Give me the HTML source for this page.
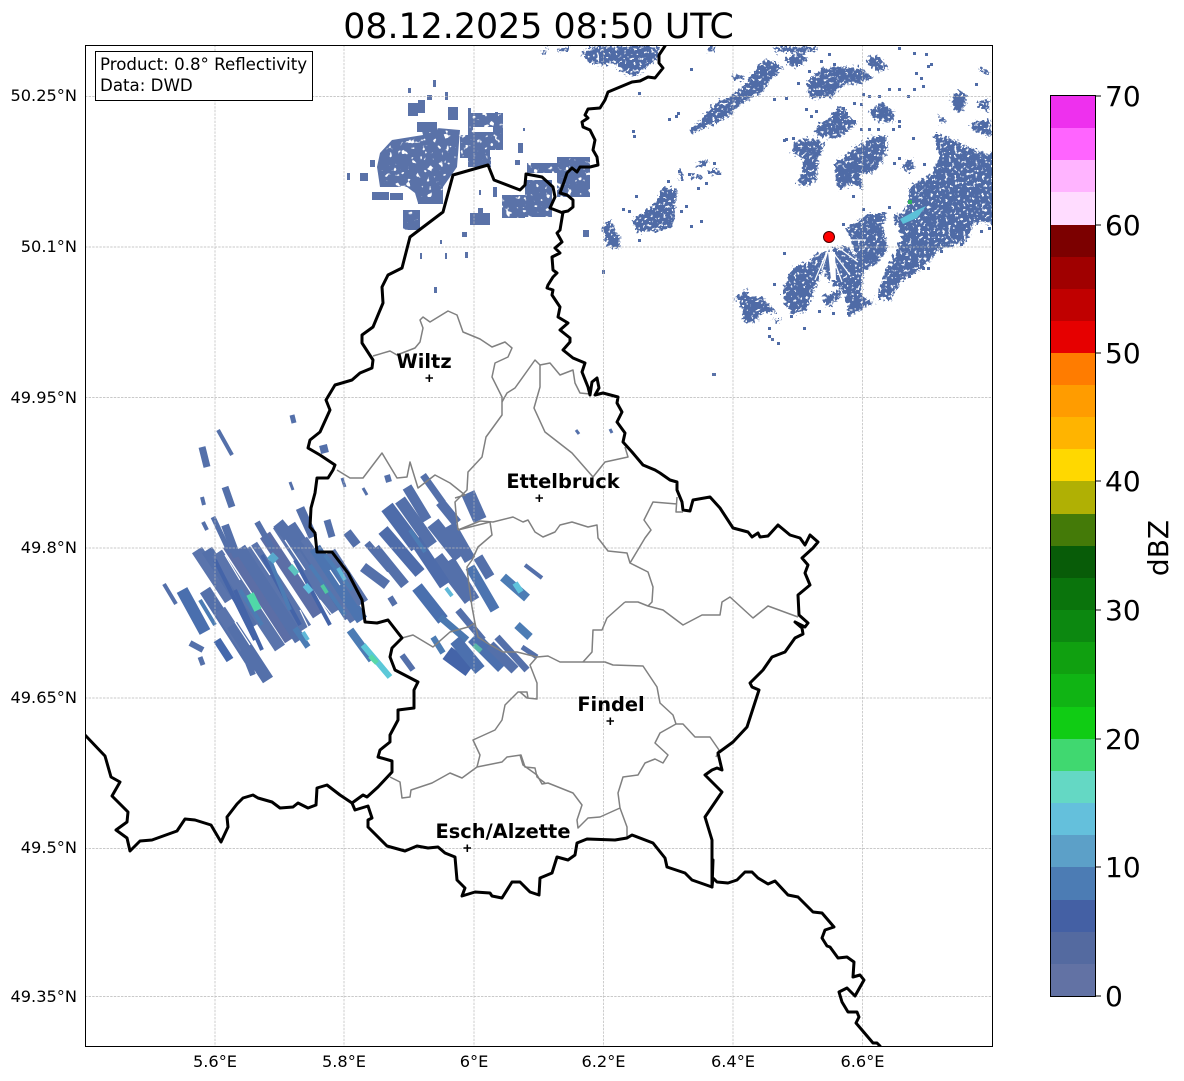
<!DOCTYPE html>
<html><head><meta charset="utf-8"><title>Radar</title>
<style>html,body{margin:0;padding:0;background:#fff}svg{display:block}text{font-family:"DejaVu Sans","Liberation Sans",sans-serif;fill:#000}</style>
</head><body>
<svg width="1184" height="1081" viewBox="0 0 1184 1081" xmlns="http://www.w3.org/2000/svg">
<defs>
<clipPath id="ax"><rect x="85" y="45" width="907" height="1001"/></clipPath>
<filter id="sp" filterUnits="userSpaceOnUse" x="0" y="0" width="1184" height="1081" color-interpolation-filters="sRGB">
<feTurbulence type="fractalNoise" baseFrequency="0.33" numOctaves="2" seed="4" result="n"/>
<feDisplacementMap in="SourceGraphic" in2="n" scale="11" xChannelSelector="R" yChannelSelector="G" result="d"/>
<feColorMatrix in="n" type="matrix" values="0 0 0 0 0 0 0 0 0 0 0 0 0 0 0 14 0 0 0 -4.2" result="m"/>
<feComposite in="d" in2="m" operator="in"/>
</filter>
<filter id="sq" filterUnits="userSpaceOnUse" x="0" y="0" width="1184" height="1081" color-interpolation-filters="sRGB">
<feTurbulence type="fractalNoise" baseFrequency="0.18" numOctaves="2" seed="8" result="n"/>
<feColorMatrix in="n" type="matrix" values="0 0 0 0 0 0 0 0 0 0 0 0 0 0 0 14 0 0 0 -4" result="m"/>
<feComposite in="SourceGraphic" in2="m" operator="in"/>
</filter>
</defs>
<rect width="1184" height="1081" fill="#fff"/>
<g clip-path="url(#ax)">
<!-- north block -->
<g fill="#5a72a8">
<g filter="url(#sq)">
<path d="M380 153L392 140L423 135L420 123L437 128L460 130L457 167L443 187L443 203L418 203L415 193L407 187L380 187L377 167Z"/>
<path d="M468 113h35v37h-35zM460 135h30v23h-30zM468 157h23v10h-23zM502 195h23v23h-23zM525 180h27v37h-27zM557 157h33v40h-33zM403 210h17v20h-17zM527 163h30v10h-30z"/>
</g>
<path d="M347 173h3v7h-3zM360 173h8v8h-8zM370 160h5v7h-5zM372 192h17v8h-17zM390 193h13v7h-13zM418 197h25v7h-25zM470 213h20v12h-20zM478 208h5v7h-5zM462 232h5v5h-5zM417 122h20v10h-20zM408 103h10v13h-10zM418 100h7v13h-7zM448 107h10v13h-10zM427 95h5v5h-5zM408 88h3v5h-3zM433 80h3v7h-3zM445 92h3v8h-3zM468 108h3v5h-3zM495 112h3v5h-3zM523 128h2v3h-2zM518 143h5v10h-5zM515 160h5v5h-5zM479 190h2v5h-2zM493 187h4v10h-4zM440 240h2v4h-2zM420 253h2v6h-2zM445 253h2v6h-2zM465 252h3v6h-3zM434 287h3v6h-3zM583 230h6v7h-6zM602 270h3v4h-3zM713 373h3v3h-3z"/>
</g>
<rect x="473" y="127" width="20" height="5" fill="#fff"/>
<!-- east scatter -->
<path fill="#4f6ba6" d="M805 108h3v3h-3zM815 110h3v3h-3zM810 115h3v3h-3zM835 115h3v3h-3zM842 107h3v3h-3zM845 112h3v3h-3zM853 120h3v3h-3zM860 128h3v3h-3zM868 128h3v3h-3zM877 128h3v3h-3zM892 128h3v3h-3zM898 120h3v3h-3zM898 125h3v3h-3zM785 138h3v3h-3zM792 137h3v3h-3zM912 137h3v3h-3zM862 93h3v3h-3zM868 95h3v3h-3zM878 95h3v3h-3zM888 88h3v3h-3zM898 88h3v3h-3zM907 95h3v3h-3zM915 72h3v3h-3zM920 77h3v3h-3zM922 85h3v3h-3zM913 88h3v3h-3zM930 63h3v3h-3zM927 65h3v3h-3zM913 52h3v3h-3zM925 53h3v3h-3zM898 47h3v3h-3zM975 83h3v3h-3zM853 102h3v3h-3zM860 103h3v3h-3zM833 63h3v3h-3zM828 53h3v3h-3zM820 60h3v3h-3zM808 70h3v3h-3zM797 82h3v3h-3zM785 97h3v3h-3zM773 98h3v3h-3zM638 92h3v3h-3zM690 68h3v3h-3zM632 130h3v3h-3zM633 135h3v3h-3zM675 115h3v3h-3zM668 118h3v3h-3zM677 112h3v3h-3zM678 170h3v3h-3zM688 173h3v3h-3zM703 163h3v3h-3zM712 170h3v3h-3zM713 162h3v3h-3zM697 187h3v3h-3zM705 182h3v3h-3zM667 180h3v3h-3zM635 195h3v3h-3zM622 208h3v3h-3zM628 210h3v3h-3zM685 205h3v3h-3zM680 210h3v3h-3zM690 225h3v3h-3zM700 220h3v3h-3zM638 239h3v3h-3zM783 139h3v3h-3zM923 163h3v3h-3zM893 162h3v3h-3zM898 157h3v3h-3zM888 206h3v3h-3zM862 208h3v3h-3zM842 223h3v3h-3zM852 195h3v3h-3zM783 252h3v3h-3zM773 283h3v3h-3zM768 327h3v3h-3zM768 335h3v3h-3zM777 342h3v3h-3zM803 327h3v3h-3zM790 315h3v3h-3zM818 310h3v3h-3zM832 312h3v3h-3zM847 312h3v3h-3zM908 275h3v3h-3zM922 267h3v3h-3zM940 250h3v3h-3zM960 243h3v3h-3zM980 230h3v3h-3zM988 227h3v3h-3zM927 267h3v3h-3z"/>
<!-- east speckle -->
<g fill="#4f6ba6" filter="url(#sp)">
<path d="M582 55L590 47L617 46L660 46L657 60L635 77L625 73L615 63L603 65L590 63Z"/>
<path d="M558 50L570 46L565 53ZM540 53L548 48L545 56ZM707 47L715 47L715 53L709 52Z"/>
<path d="M690 130L703 118L713 105L733 95L747 82L760 62L772 60L783 68L773 77L762 92L747 100L733 112L723 120L707 127L692 133Z"/>
<path d="M733 75h10v5h-10zM773 47h44l-2 5h-40zM785 60L803 50L807 60L797 68L787 63Z"/>
<path d="M807 82L823 68L840 67L860 68L873 78L860 83L840 87L833 97L810 98Z"/>
<path d="M865 60L877 55L890 68L877 72ZM868 112L882 103L895 112L893 122L880 122Z"/>
<path d="M815 128L827 120L840 107L857 123L850 130L840 137L817 137Z"/>
<path d="M795 143L807 138L825 143L818 160L817 173L817 180L803 187L797 183L803 170L803 157L792 153Z"/>
<path d="M835 163L857 147L873 137L887 135L887 153L873 173L860 173L863 190L853 183L840 190L835 177Z"/>
<path d="M902 165L912 158L915 168L907 172Z"/>
<path d="M952 95L962 90L968 98L962 112L953 110ZM977 102L990 100L988 112L980 108ZM980 67L990 73L988 75L978 70ZM970 123L990 120L992 137L980 133L973 130ZM937 113L947 122L941 124Z"/>
<path d="M910 187L933 173L940 157L933 132L953 140L983 153L996 153L996 223L973 223L967 242L942 248L923 267L900 283L890 300L877 298L885 273L898 247L902 237L893 217L907 210Z"/>
<path d="M847 228L870 213L887 213L883 227L888 250L877 263L863 273L862 297L875 302L865 307L850 315L847 303L843 288L833 285L823 270L823 253L833 248L847 247L857 257Z"/>
<path d="M817 253L823 253L822 270L812 297L807 310L793 315L785 303L782 292L793 267L813 260Z"/>
<path d="M823 297L840 290L840 297L830 307L823 303Z"/>
<path d="M735 298L747 290L750 297L763 298L777 313L763 313L753 323L743 322L742 303Z"/>
<path d="M772 320L783 318L778 323Z"/>
<path d="M632 220L653 207L663 187L677 190L673 227L653 232L637 232Z"/>
<path d="M602 227L610 220L620 237L620 248L607 247Z"/>
<path d="M695 165L707 160L708 165L697 168ZM708 170h12v4h-12zM692 175h10v4h-10zM680 170h3v10h-3z"/>
</g>
<!-- rays near radar -->
<g stroke="#fff" stroke-width="1.200" fill="none">
<path d="M829 247L815 280M829 247L822 270M829 247L842 282M829 247L850 275M835 245L858 262M837 240L866 240"/>
</g>
<path d="M828 252L835 252L836 280L831 280Z" fill="#fff"/>
<path d="M917 210L926 206L917 218L903 224L900 219Z" fill="#5cc0d8"/>
<rect x="908" y="200" width="4" height="4" fill="#30b060"/>
<rect x="771" y="338" width="3" height="3" fill="#5a72a8"/><rect x="712" y="373" width="3" height="3" fill="#5a72a8"/>
<!-- west main bundle -->
<g fill="none" stroke="#5a74ac" stroke-width="12">
<path d="M197 550L230 600"/>
<path stroke="#5470aa" d="M207 550L256 625"/>
<path d="M217 553L280 648"/>
<path stroke="#5c6ea6" d="M228 545L290 640"/>
<path stroke="#5470aa" d="M240 548L300 640"/>
<path d="M252 545L306 628"/>
<path stroke="#5c6ea6" d="M265 535L318 615"/>
<path d="M278 525L335 612"/>
<path stroke="#5470aa" d="M290 525L350 617"/>
<path d="M302 540L355 620"/>
<path stroke="#4c74b0" d="M315 548L362 620"/>
<path d="M330 552L363 603"/>
<path stroke="#5470aa" d="M205 590L250 660"/>
<path d="M220 610L258 668"/>
<path stroke="#5470aa" d="M232 625L268 680"/>
</g>
<g fill="none" stroke="#5470aa" stroke-width="6">
<path stroke-width="4" d="M164 584L176 604"/>
<path stroke-width="12" stroke="#4a6fae" d="M182 590L205 632"/>
<path stroke-width="8" stroke="#4468ac" d="M217 640L230 660"/>
<path stroke-width="6" d="M190 643L203 650"/>
<path stroke-width="5" d="M200 657L203 665"/>
<path stroke-width="7" d="M202 447L207 467"/>
<path stroke-width="4" d="M218 430L232 455"/>
<path stroke-width="7" d="M225 487L232 507"/>
<path stroke-width="4" d="M202 497L204 505"/>
<path stroke-width="4" d="M203 522L207 530"/>
<path stroke-width="5" d="M292 415L294 423"/>
<path stroke-width="8" d="M323 445L325 453"/>
<path stroke-width="3" d="M290 482L293 490"/>
<path stroke-width="3" d="M342 478L345 487"/>
<path stroke-width="3" d="M363 488L367 495"/>
<path stroke-width="6" d="M387 475L389 482"/>
<path stroke-width="3" d="M576 430L579 434"/>
<path stroke-width="3" d="M610 429L612 433"/>
<path stroke-width="5" d="M213 517L230 553"/>
<path stroke-width="8" d="M225 525L237 557"/>
<path stroke-width="6" d="M257 522L273 550"/>
<path stroke-width="12" d="M278 523L300 550"/>
<path stroke-width="9" d="M300 508L313 537"/>
<path stroke-width="6" d="M243 650L253 675"/>
<path stroke-width="6" stroke="#4c7cb4" d="M295 628L308 647"/>
<path stroke-width="8" stroke="#4c7cb4" d="M350 630L372 660"/>
<path stroke-width="6" d="M402 655L413 670"/>
<path stroke-width="9" d="M347 532L357 545"/>
<path stroke-width="7" d="M327 520L332 537"/>
<path stroke-width="14" stroke="#4e6caa" d="M387 507L417 547"/>
<path stroke-width="10" d="M407 487L427 520"/>
<path stroke-width="10" d="M363 567L387 585"/>
<path stroke-width="12" stroke="#4e6caa" d="M383 530L420 573"/>
<path stroke-width="7" d="M367 543L390 570"/>
<path stroke-width="12" stroke="#4a70ae" d="M417 587L443 620"/>
<path stroke-width="7" stroke="#4a78b0" d="M440 617L467 640"/>
<path stroke-width="14" d="M433 523L460 557"/>
<path stroke-width="13" d="M437 557L470 600"/>
<path stroke-width="7" d="M423 475L443 503"/>
<path stroke-width="10" d="M440 502L457 523"/>
<path stroke-width="14" d="M468 493L480 520"/>
<path stroke-width="6" d="M390 597L395 605"/>
<path stroke-width="10" stroke="#4c74b0" d="M470 567L495 610"/>
<path stroke-width="9" stroke="#4c7cb4" d="M503 577L527 598"/>
<path stroke-width="4" d="M525 565L542 578"/>
<path stroke-width="8" stroke="#4c7cb4" d="M517 625L530 637"/>
<path stroke-width="5" d="M522 647L537 657"/>
<path stroke-width="6" stroke="#4c7cb4" d="M433 637L443 653"/>
<path stroke-width="15" stroke="#4464a8" d="M447 653L470 670"/>
<path stroke-width="14" stroke="#4c70ae" d="M473 637L503 667"/>
<path stroke-width="7" d="M497 637L527 670"/>
<path stroke-width="7" d="M458 610L483 640"/>
<path stroke-width="10" d="M478 557L490 577"/>
<path stroke-width="12" d="M400 500L432 545"/>
<path stroke-width="10" d="M375 548L405 585"/>
<path stroke-width="12" stroke="#4e6caa" d="M415 540L445 585"/>
<path stroke-width="10" d="M450 560L475 600"/>
<path stroke-width="12" d="M450 525L470 560"/>
<path stroke-width="12" stroke="#4c70ae" d="M455 640L480 670"/>
<path stroke-width="10" d="M490 645L515 670"/>
</g>
<g fill="none" stroke="#4464a8" stroke-width="4">
<path d="M215 560L255 640M262 555L300 625M295 560L330 625M235 590L262 650"/>
</g>
<g fill="none" stroke="#4c7cb4" stroke-width="4">
<path d="M200 600L215 625M240 590L262 625M270 560L290 610M310 565L345 615M325 555L352 590M410 530L425 552"/>
</g>
<g fill="none" stroke="#fff" stroke-width="1.200">
<path d="M225 555L240 580M250 545L270 575M285 540L305 570M235 622L250 645M320 600L340 625M300 610L312 635M330 570L340 585"/>
</g>
<g fill="none" stroke-width="6">
<path stroke="#50d8a8" stroke-width="8" d="M250 594L258 610"/>
<path stroke="#5cc4c0" d="M290 566L297 574"/>
<path stroke="#58a8cc" stroke-width="8" d="M270 555L276 561"/>
<path stroke="#60c0dc" d="M305 585L311 592"/>
<path stroke="#50c8a0" stroke-width="4" d="M322 585L327 593"/>
<path stroke="#5cc8d8" d="M363 645L390 677"/>
<path stroke="#58d8a8" stroke-width="5" d="M370 656L377 663"/>
<path stroke="#60c4dc" d="M515 583L521 592"/>
<path stroke="#58b8a8" stroke-width="5" d="M474 645L481 651"/>
<path stroke="#60b8d8" stroke-width="4" d="M446 588L452 596M338 568L345 580M303 632L308 640"/>
</g>
<!-- grid -->
<g stroke="#b8b8b8" stroke-width=".7" stroke-dasharray="2.4 1.2" fill="none">
<path d="M215 45V1046M344 45V1046M474 45V1046M603.5 45V1046M733 45V1046M862.5 45V1046"/>
<path d="M85 96.5H992M85 247H992M85 397.5H992M85 548H992M85 698H992M85 848.5H992M85 996.5H992"/>
</g>
<!-- red dot -->
<circle cx="829" cy="237" r="5.500" fill="#f00" stroke="#400" stroke-width="1"/>
<!-- grey regions -->
<g fill="none" stroke="#808080" stroke-width="1.500" stroke-linejoin="round">
<path d="M373 356L390 351L397 355L415 348L420 342L423 328L420 320L423 317L430 322L448 311L457 315L463 332L480 339L492 347L505 342L512 348L508 357L495 363L492 377L502 397L502 415L486 437L482 457L468 472L467 490L455 502L456 513L458 530"/>
<path d="M502 402L507 393L515 388L535 360L540 365L550 363L560 375L573 370L575 383L580 393L590 394"/>
<path d="M540 365L540 387L534 408L545 432L572 453L593 477L605 462L628 457L625 447"/>
<path d="M458 530L480 521L493 522L513 517L523 522L528 520L535 532L543 537L555 532L560 525L572 522L588 527L597 525L598 538L608 551L627 553L630 563L648 572L653 587L652 602L648 606"/>
<path d="M630 563L645 538L651 530L644 520L653 502L677 504M677 497L676 512L683 512"/>
<path d="M625 602L638 602L648 606L663 610L683 625L702 615L720 615L722 602L730 597L753 618L768 606L798 617"/>
<path d="M625 602L607 618L602 630L593 630L592 652L583 662"/>
<path d="M583 662L560 662L548 656L537 657L530 665L537 683L537 699L527 698L520 692"/>
<path d="M583 662L600 662L605 662L613 665L643 666L657 687L660 703L673 715L676 724L683 724L695 737L710 737L719 750L716 757"/>
<path d="M676 724L660 733L655 743L668 755L663 763L655 759L645 763L638 775L623 777L618 793L620 808L600 817L588 818L578 828L577 820L582 805L573 793L548 783L542 784L537 775L523 765L520 755"/>
<path d="M620 808L627 827L627 838"/>
<path d="M390 777L400 782L402 798L410 797L411 790L432 783L450 773L462 778L477 767L502 762L507 757L521 755L525 767L535 768L537 777L545 783"/>
<path d="M477 767L480 755L473 740L495 730L502 720L505 705L518 692L527 692L528 698"/>
<path d="M337 470L350 478L363 478L382 453L397 478L407 477L410 462L418 488L435 475L450 483L465 495L455 498"/>
<path d="M458 530L490 522L492 535L478 547L472 560L467 567L468 577L472 607L475 623L468 627L450 632L433 647L413 635L402 638"/>
<path d="M475 623L478 637L487 643L503 652L517 652L537 657"/>
</g>
<!-- black borders -->
<g fill="none" stroke="#000" stroke-width="3" stroke-linejoin="round" stroke-linecap="round">
<path d="M665 46L659 55L659 63L663 68L655 78L648 77L640 81L632 82L620 87L608 92L605 100L600 108L588 109L585 115L588 118L582 122L583 127L590 130L595 140L593 150L597 157L598 165L590 167L580 167L577 172L572 168L567 173L564 182L560 193L567 195L573 200L573 207L568 211L563 212L560 230L557 233L562 242L555 248L560 253L552 257L553 270L557 273L553 277L548 285L547 288L553 290L552 295L560 307L558 317L568 323L560 330L570 338L570 342L563 350L573 358L585 363L582 372L588 387L590 395L592 382L597 378L599 388L595 395L603 393L618 397L617 403L622 412L617 422L625 433L623 442L632 452L643 465L655 470L660 473L670 480L677 482L677 490L682 502L683 510L690 511L693 500L710 497L720 508L733 528L748 532L752 537L758 533L760 537L768 536L778 525L790 535L800 538L805 545L810 535L818 542L813 548L802 558L808 565L805 573L810 585L798 595L799 615L808 623L805 627L795 622L802 628L803 634L795 638L785 652L772 657L763 670L750 683L752 687L759 690L747 727L733 742L718 753L722 770L717 768L712 770L705 775L722 792L705 817L712 840L712 887"/>
<path d="M712 887L692 880L685 873L667 867L665 858L653 843L632 835L627 838L615 840L587 839L577 843L575 855L568 860L557 857L552 873L540 878L539 895L530 892L520 882L512 882L502 898L492 896L490 893L475 892L462 896L465 888L457 880L455 857L445 853L438 847L428 848L417 846L405 851L387 846L368 827L368 820L372 818L368 806L355 810L352 803"/>
<path d="M352 803L340 795L327 785L317 788L316 805L308 808L298 803L293 807L280 808L272 802L258 798L253 795L243 798L237 804L227 817L228 827L221 842L211 825L195 820L185 819L177 831L152 840L140 841L130 851L127 838L116 830L127 822L128 812L112 796L120 782L111 777L105 756L85 735"/>
<path d="M352 803L363 795L367 797L378 787L392 772L392 761L378 757L380 750L390 742L390 735L398 720L398 710L414 708L414 690L418 682L395 670L390 657L392 648L402 638L388 620L377 623L365 622L362 600L348 573L332 552L317 552L315 533L310 527L311 508L315 493L317 478L328 478L333 470L335 465L320 455L308 448L310 440L320 432L330 410L326 400L335 385L352 380L360 373L372 368L373 360L362 343L362 335L373 327L383 303L382 287L388 275L402 268L410 237L443 212L453 175L488 165L494 180L520 190L525 185L526 174L542 177L553 187L555 197L550 208L563 213"/>
<path d="M713 860L712 887L713 878L717 882L728 883L737 880L745 872L752 872L758 878L768 884L775 881L788 895L798 897L813 912L822 913L834 927L825 930L822 938L827 946L830 947L838 958L847 957L854 962L853 977L860 975L864 980L855 996L847 988L839 992L842 1002L848 1012L857 1012L859 1017L856 1023L873 1043L877 1043L880 1046"/>
</g>
</g>
<!-- axes border -->
<rect x="85.500" y="45.500" width="907" height="1001" fill="none" stroke="#000" stroke-width="1"/>
<!-- city markers -->
<g stroke="#000" stroke-width="1.600" fill="none">
<path d="M425.500 378H433M429.300 374.500V382M535.500 498H543M539.300 494.500V502M606.500 721H614M610.300 717.500V725M463.500 848H471M467.300 844.500V852"/>
</g>
<!-- legend box -->
<rect x="95.500" y="51.500" width="217" height="49" fill="#fff" stroke="#000" stroke-width="1"/>
<text x="100" y="70" font-size="16.650">Product: 0.8° Reflectivity</text>
<text x="100" y="91" font-size="16.650">Data: DWD</text>
<!-- title -->
<text x="538.500" y="38" font-size="34.800" text-anchor="middle">08.12.2025 08:50 UTC</text>
<!-- cities -->
<g font-size="19.400" font-weight="bold" text-anchor="middle">
<text x="424" y="368">Wiltz</text>
<text x="563" y="488">Ettelbruck</text>
<text x="611" y="711">Findel</text>
<text x="503" y="838">Esch/Alzette</text>
</g>
<!-- tick labels -->
<g font-size="16.200" text-anchor="end">
<text x="77" y="101">50.25°N</text>
<text x="77" y="252">50.1°N</text>
<text x="77" y="403">49.95°N</text>
<text x="77" y="553">49.8°N</text>
<text x="77" y="703">49.65°N</text>
<text x="77" y="853">49.5°N</text>
<text x="77" y="1002">49.35°N</text>
</g>
<g font-size="16.200" text-anchor="middle">
<text x="215" y="1067">5.6°E</text>
<text x="344" y="1067">5.8°E</text>
<text x="474" y="1067">6°E</text>
<text x="603.500" y="1067">6.2°E</text>
<text x="733" y="1067">6.4°E</text>
<text x="862.500" y="1067">6.6°E</text>
</g>
<!-- colorbar -->
<g shape-rendering="crispEdges">
<rect x="1050" y="96" width="45" height="33" fill="#ee30ee"/>
<rect x="1050" y="128" width="45" height="33" fill="#ff64ff"/>
<rect x="1050" y="160" width="45" height="33" fill="#ffb4ff"/>
<rect x="1050" y="192" width="45" height="33" fill="#ffdcff"/>
<rect x="1050" y="225" width="45" height="33" fill="#7c0000"/>
<rect x="1050" y="257" width="45" height="33" fill="#a00000"/>
<rect x="1050" y="289" width="45" height="33" fill="#c00000"/>
<rect x="1050" y="321" width="45" height="33" fill="#e60000"/>
<rect x="1050" y="353" width="45" height="33" fill="#ff7c00"/>
<rect x="1050" y="385" width="45" height="33" fill="#ff9c00"/>
<rect x="1050" y="417" width="45" height="33" fill="#ffb400"/>
<rect x="1050" y="449" width="45" height="33" fill="#ffd800"/>
<rect x="1050" y="481" width="45" height="33" fill="#b0b004"/>
<rect x="1050" y="514" width="45" height="33" fill="#447a08"/>
<rect x="1050" y="546" width="45" height="33" fill="#085c08"/>
<rect x="1050" y="578" width="45" height="33" fill="#0a740c"/>
<rect x="1050" y="610" width="45" height="33" fill="#0c8810"/>
<rect x="1050" y="642" width="45" height="33" fill="#10a010"/>
<rect x="1050" y="674" width="45" height="33" fill="#10b414"/>
<rect x="1050" y="707" width="45" height="33" fill="#10cc14"/>
<rect x="1050" y="739" width="45" height="33" fill="#40d870"/>
<rect x="1050" y="771" width="45" height="33" fill="#64d8c4"/>
<rect x="1050" y="803" width="45" height="33" fill="#64c0dc"/>
<rect x="1050" y="835" width="45" height="33" fill="#5ca0c8"/>
<rect x="1050" y="867" width="45" height="33" fill="#4c7cb4"/>
<rect x="1050" y="900" width="45" height="33" fill="#4460a4"/>
<rect x="1050" y="932" width="45" height="33" fill="#546aa0"/>
<rect x="1050" y="964" width="45" height="32" fill="#6272a4"/>
<rect x="1050.500" y="95.500" width="45" height="901" fill="none" stroke="#000" stroke-width="1"/>
<path d="M1095 96h6M1095 225h6M1095 353h6M1095 481h6M1095 610h6M1095 739h6M1095 867h6M1095 996h6" stroke="#000" stroke-width="1" fill="none"/>
</g>
<g font-size="28">
<text x="1105" y="106">70</text>
<text x="1105" y="235">60</text>
<text x="1105" y="363">50</text>
<text x="1105" y="491">40</text>
<text x="1105" y="620">30</text>
<text x="1105" y="749">20</text>
<text x="1105" y="877">10</text>
<text x="1105" y="1006">0</text>
</g>
<text transform="translate(1168,548) rotate(-90)" font-size="28" text-anchor="middle">dBZ</text>
</svg>
</body></html>
